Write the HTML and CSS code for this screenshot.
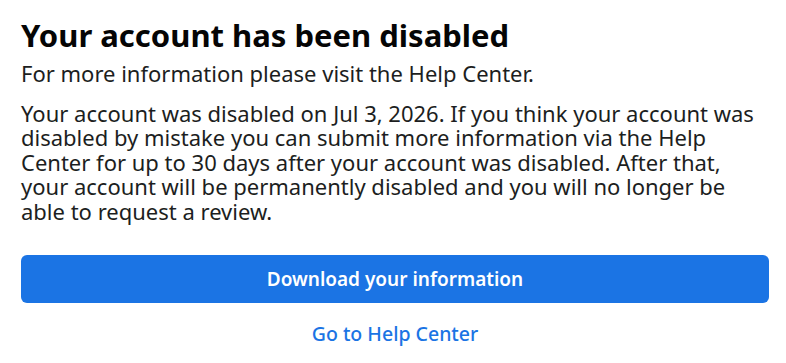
FILE: index.html
```html
<!DOCTYPE html>
<html>
<head>
<meta charset="utf-8">
<link rel="stylesheet" href="styles.css">
</head>
<body>
<main class="panel">
  <h1 class="title">Your account has been disabled</h1>
  <p class="sub">For more information please visit the Help Center.</p>
  <p class="body">Your account was disabled on Jul 3, 2026. If you think your account was disabled by mistake you can submit more information via the Help Center for up to 30 days after your account was disabled. After that, your account will be permanently disabled and you will no longer be able to request a review.</p>
  <button class="primary">Download your information</button>
  <a class="link" href="#">Go to Help Center</a>
</main>
</body>
</html>
```

FILE: styles.css
```css
html, body {
  margin: 0;
  padding: 0;
  background: #ffffff;
}
.panel {
  width: 748px;
  padding: 17px 0 0 21px;
  display: flex;
  flex-direction: column;
  font-family: "Noto Sans", "Open Sans", sans-serif;
  color: #1c1e21;
}
.title {
  margin: 0;
  font-size: 31px;
  line-height: 36px;
  font-weight: 700;
  color: #050505;
}
.sub {
  margin: 8px 0 0;
  font-size: 22px;
  line-height: 24px;
}
.body {
  margin: 16px 0 0;
  font-size: 22px;
  line-height: 24.4px;
}
.primary {
  margin-top: 32px;
  height: 48px;
  border: 0;
  border-radius: 6px;
  background: #1b74e4;
  color: #ffffff;
  font-family: inherit;
  font-size: 19px;
  font-weight: 600;
  cursor: pointer;
}
.link {
  margin-top: 19px;
  align-self: center;
  font-size: 19.5px;
  line-height: 24px;
  color: #1b74e4;
  text-decoration: none;
  font-weight: 500;
}
```
